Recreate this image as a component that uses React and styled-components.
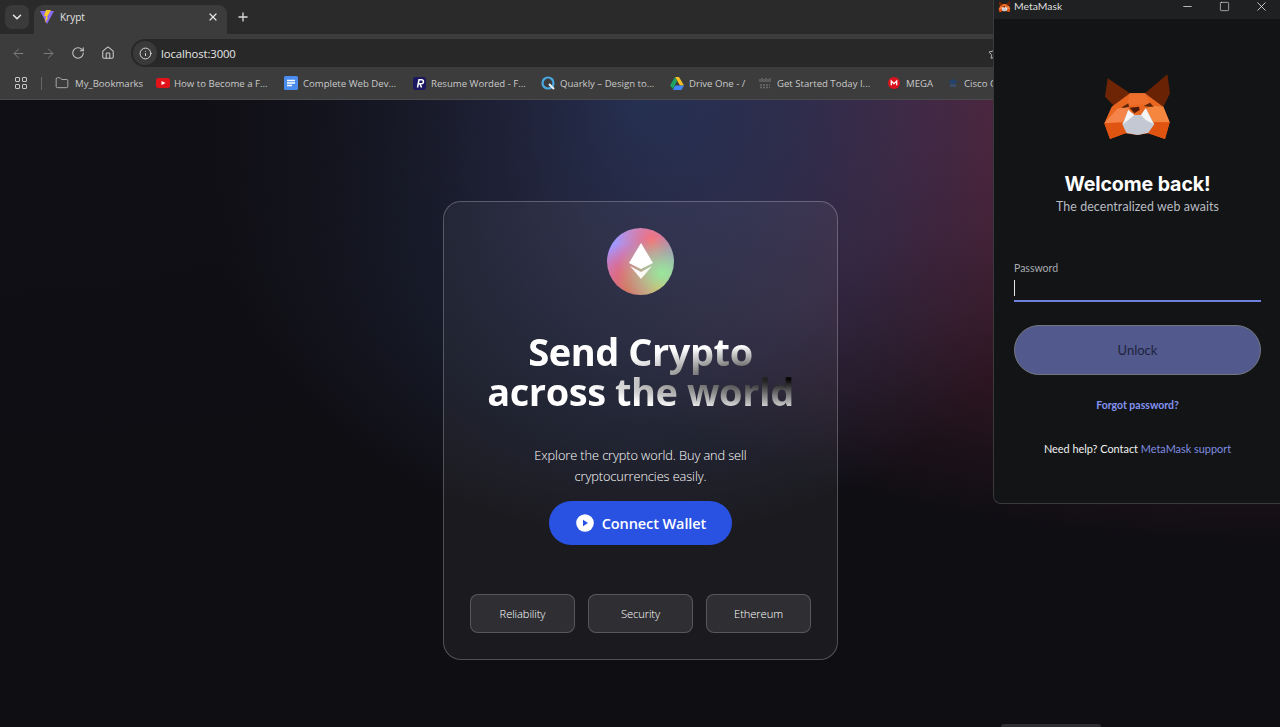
import React from "react";
import styled, { createGlobalStyle } from "styled-components";
import { ChevronDown, X, Plus, ArrowLeft, ArrowRight, RotateCw, House, Info, Folder, Star, Minus, Square } from "lucide-react";

const Global = createGlobalStyle`
  html, body { margin: 0; padding: 0; height: 100%; background: #0f0e13; }
  #root { height: 100%; }
  * { box-sizing: border-box; }
`;

const Screen = styled.div`
  position: relative; width: 1280px; height: 727px; overflow: hidden;
  display: flex; flex-direction: column; background: #0f0e13;
  font-family: "Open Sans", "Noto Sans", sans-serif;
`;

/* ---- browser chrome ---- */
const TabStrip = styled.div`
  height: 34px; background: #2a2a2a; display: flex; align-items: flex-end; padding-left: 5px; gap: 5px; flex: none;
`;
const TabMenu = styled.div`
  width: 24px; height: 24px; margin-bottom: 5px; border-radius: 7px; background: #3a3a3a; color: #e6e6e6;
  display: flex; align-items: center; justify-content: center;
`;
const Tab = styled.div`
  width: 193px; height: 29px; background: #3c3c3c; border-radius: 9px 9px 0 0; display: flex; align-items: center;
  padding: 0 8px 5px 6px; color: #e3e3e3; font-size: 10px; gap: 6px;
`;
const TabTitle = styled.span`flex: 1;`;
const NewTab = styled.div`
  color: #dcdcdc; height: 29px; padding: 0 0 5px 4px; display: flex; align-items: center;
`;
const Toolbar = styled.div`
  height: 33px; background: #3c3c3c; display: flex; align-items: center; padding: 5px 0 0 11px; flex: none;
`;
const NavButton = styled.div`
  width: 30px; display: flex; color: ${p => (p.$off ? "#7d7d7d" : "#c9c9c9")};
`;
const Omnibox = styled.div`
  flex: 1; height: 28px; background: #282828; border-radius: 14px 0 0 14px; display: flex; align-items: center;
  padding-left: 2px; gap: 4px; color: #e6e6e6; font-size: 11.3px; letter-spacing: -0.1px;
`;
const InfoChip = styled.div`
  width: 24px; height: 24px; border-radius: 50%; background: #3a3a3a; display: flex; align-items: center; justify-content: center; color: #dadada;
`;
const OmniStar = styled.div`
  margin-left: auto; margin-right: 279px; display: flex; color: #c9c9c9;
`;
const BookmarkBar = styled.div`
  height: 33px; background: #3c3c3c; border-bottom: 1px solid #4a4a50; display: flex; align-items: center; padding-left: 15px; flex: none; overflow: hidden;
  color: #c9c9c9; font-size: 9.6px; white-space: nowrap;
`;
const AppsGrid = styled.div`
  display: grid; grid-template-columns: 5px 5px; gap: 2px; width: 12px; flex: none;
`;
const AppCell = styled.i`display: block; width: 5px; height: 5px; border: 1.2px solid #c6c6c6; border-radius: 1px;`;
const Separator = styled.div`width: 1px; height: 13px; background: #666; margin: 0 13px 0 14px; flex: none;`;
const Bookmark = styled.div`
  width: ${p => p.$w}px; flex: none; display: flex; align-items: center; gap: ${p => p.$gap ?? 5}px;
`;
const BIcon = styled.svg`flex: none; display: block;`;

/* ---- dapp page ---- */
const Page = styled.main`
  flex: 1; display: flex; justify-content: center; align-items: flex-start; padding-top: 101px;
  background-color: #0f0e13;
  background-image:
    radial-gradient(at 0% 0%, hsla(253,16%,7%,1) 0, transparent 50%),
    radial-gradient(at 50% 0%, hsla(225,39%,30%,1) 0, transparent 50%),
    radial-gradient(at 100% 0%, hsla(339,49%,30%,1) 0, transparent 50%);
`;
const Card = styled.section`
  width: 395px; height: 459px; margin-left: 1px; border-radius: 18px; border: 1px solid rgba(255,255,255,0.24);
  background: rgba(255,255,255,0.05); display: flex; flex-direction: column; align-items: center; padding-top: 26px; color: #fff;
`;
const EthBadge = styled.div`
  width: 67px; height: 67px; border-radius: 50%; flex: none; display: flex; align-items: center; justify-content: center;
  background-color: #a099ff;
  background-image:
    radial-gradient(at 83% 67%, rgb(152,231,156) 0, transparent 58%),
    radial-gradient(at 67% 20%, hsla(357,94%,71%,1) 0, transparent 59%),
    radial-gradient(at 88% 35%, hsla(222,81%,65%,1) 0, transparent 50%),
    radial-gradient(at 31% 91%, hsla(9,61%,61%,1) 0, transparent 52%),
    radial-gradient(at 27% 71%, hsla(336,91%,65%,1) 0, transparent 49%),
    radial-gradient(at 74% 89%, hsla(30,98%,65%,1) 0, transparent 51%);
`;
const Title = styled.h1`
  margin: 36px 0 0; font-size: 38px; line-height: 40px; font-weight: 700; text-align: center; white-space: nowrap; letter-spacing: -0.45px;
  background-color: #fff;
  background-image:
    radial-gradient(at 4% 36%, hsla(0,0%,100%,1) 0, transparent 53%),
    radial-gradient(at 100% 60%, rgb(0,0,0) 0, transparent 50%);
  -webkit-background-clip: text; background-clip: text; color: transparent;
`;
const Lead = styled.p`
  margin: 34px 0 0; font-size: 12.8px; line-height: 21px; font-weight: 300; text-align: center; color: #fff; letter-spacing: -0.1px;
`;
const ConnectButton = styled.button`
  margin-top: 14px; width: 183px; height: 44px; border: 0; border-radius: 22px; background: #2952e3; color: #fff; font: inherit;
  font-size: 14.5px; font-weight: 600; display: flex; align-items: center; justify-content: center; gap: 8px; letter-spacing: -0.1px; padding: 0 0 0 1px;
`;
const FeatureRow = styled.div`
  margin-top: 49px; display: flex; gap: 13px;
`;
const Feature = styled.div`
  width: 105px; height: 39px; border-radius: 8px; background: #2f2f33; border: 1px solid rgba(255,255,255,0.2);
  display: flex; align-items: center; justify-content: center; font-size: 11.2px; font-weight: 300; color: #fff; letter-spacing: -0.1px;
`;

/* ---- metamask popup (a window on the desktop) ---- */
const Popup = styled.aside`
  position: absolute; left: 993px; top: 0; width: 287px; height: 504px; background: #131416; color: #fff;
  border-left: 1px solid #3a3a3d; border-bottom: 1px solid #3a3a3d; border-bottom-left-radius: 8px;
  display: flex; flex-direction: column; font-family: "Lato", "Inter", sans-serif;
`;
const TitleBar = styled.div`
  height: 19px; background: #1f2021; display: flex; align-items: center; padding: 0 0 7px 3px; gap: 2px; font-size: 10.4px; color: #dedede; flex: none;
`;
const WindowControls = styled.div`
  margin-left: auto; display: flex; align-items: center; color: #e8e8e8;
`;
const WinButton = styled.div`
  width: 37px; display: flex; justify-content: center;
`;
const PopupBody = styled.div`
  flex: 1; display: flex; flex-direction: column; align-items: center; padding: 46px 19px 0 20px;
`;
const Welcome = styled.h2`
  margin: 27px 0 0; font-family: "Inter", sans-serif; font-size: 19.6px; line-height: 24px; font-weight: 700; color: #fff; letter-spacing: -0.1px;
`;
const Tagline = styled.div`
  margin-top: 2px; font-size: 12.4px; line-height: 18px; color: #b9bcc2; letter-spacing: 0.1px;
`;
const Field = styled.div`
  width: 100%; margin-top: 45px;
`;
const FieldLabel = styled.div`
  font-size: 10.5px; line-height: 14px; color: #a8abb0;
`;
const FieldInput = styled.div`
  height: 26px; margin-top: 1px; border-bottom: 2px solid #6f81dc; display: flex; align-items: flex-start; padding-top: 4px;
`;
const Caret = styled.i`display: block; width: 1px; height: 16px; background: #e8e8e8;`;
const Unlock = styled.button`
  width: 100%; height: 50px; margin-top: 23px; border-radius: 25px; background: #52598c; border: 1px solid #74767e; font: inherit;
  font-family: "Lato", sans-serif; font-size: 13px; color: #20233c; padding: 0; flex: none;
`;
const Forgot = styled.a`
  margin-top: 23px; font-size: 10.5px; line-height: 14px; font-weight: 700; color: #8393f2;
`;
const Help = styled.div`
  margin-top: 29px; font-size: 10.9px; line-height: 16px; color: #f2f2f2;
`;
const HelpLink = styled.span`color: #7f8de0;`;
const TaskHint = styled.div`
  position: absolute; left: 1001px; bottom: 0; width: 100px; height: 3px; background: #2e2e32; border-radius: 4px 4px 0 0;
`;

function Fox({ size = 85 }) {
  return (
    <svg width={size} height={size * 80 / 85} viewBox="0 0 255 240">
      <polygon points="38,40 105,85 66,132 30,95" fill="#6e2505" />
      <polygon points="217,28 225,85 205,125 150,85" fill="#6a2204" />
      <polygon points="105,85 150,85 205,125 224,172 210,222 160,205 128,210 90,205 45,222 28,175 50,125" fill="#e8661f" />
      <polygon points="105,85 150,85 170,122 135,118 95,122" fill="#ee6f2c" />
      <polygon points="66,132 95,122 105,136 80,175 28,175" fill="#f5844a" />
      <polygon points="170,122 205,125 224,172 175,172 150,132" fill="#f58640" />
      <polygon points="28,175 80,172 92,205 45,222" fill="#df5410" />
      <polygon points="224,172 175,172 160,205 210,222" fill="#df5410" />
      <polygon points="100,135 118,150 138,150 152,130 178,178 160,203 128,210 95,204 82,178" fill="#c4c8d2" />
      <polygon points="100,135 118,150 100,165 84,178" fill="#f4f4f6" />
      <polygon points="152,130 138,150 152,165 176,177" fill="#f4f4f6" />
      <polygon points="78,128 100,115 102,125 90,128" fill="#5a2409" />
      <polygon points="146,123 165,113 176,125 160,125" fill="#5a2409" />
      <polygon points="104,128 132,125 134,135 118,145" fill="#4f1b08" />
    </svg>
  );
}

function EthMark() {
  return (
    <svg width="24" height="37" viewBox="0 0 24 37">
      <polygon points="12,0 24,20 12,26 0,20" fill="#fff" />
      <polygon points="12,36 1,23 12,29 23,23" fill="#fff" fillOpacity="0.92" />
    </svg>
  );
}

const VITE = (
  <BIcon width="14" height="14" viewBox="0 0 14 14">
    <polygon points="0,1 14,1 7,14" fill="#8b6cf0" />
    <polygon points="6,0 11,0 7,7 8,8 5,13 6,6 4,6" fill="#f7c52c" />
  </BIcon>
);
const YT = (
  <BIcon width="14" height="10" viewBox="0 0 14 10">
    <rect width="14" height="10" rx="2.5" fill="#e3131a" />
    <polygon points="5.5,3 9.5,5 5.5,7" fill="#fff" />
  </BIcon>
);
const DOC = (
  <BIcon width="14" height="14" viewBox="0 0 14 14">
    <rect width="14" height="14" rx="1.5" fill="#4a8cf0" />
    <path d="M3 4.5h8M3 7h8M3 9.5h5" stroke="#fff" strokeWidth="1.3" />
  </BIcon>
);
const RES = (
  <BIcon width="13" height="13" viewBox="0 0 13 13">
    <rect width="13" height="13" rx="3" fill="#1b1760" />
    <path d="M4.5 10.5 6 2.8h2.5a1.9 1.9 0 0 1 0 3.9H5.4M7 6.7l1.5 3.8" stroke="#fff" strokeWidth="1.5" fill="none" />
  </BIcon>
);
const QUARK = (
  <BIcon width="14" height="14" viewBox="0 0 14 14">
    <circle cx="7" cy="7" r="5.5" fill="none" stroke="#4aa8e0" strokeWidth="2.2" />
    <path d="M8 8l5 5" stroke="#e8f4fa" strokeWidth="2" />
  </BIcon>
);
const DRIVE = (
  <BIcon width="14" height="13" viewBox="0 0 14 13">
    <polygon points="5,0 9,0 14,8.5 10,8.5" fill="#f6c026" />
    <polygon points="5,0 7,4 3,12 0,8.5" fill="#1ea362" />
    <polygon points="3,13 5,8.5 14,8.5 11.5,13" fill="#4285f4" />
  </BIcon>
);
const CISCO = (
  <BIcon width="12" height="12" viewBox="0 0 12 12">
    <path d="M1 2v3M3 1v4M5 2v3M7 1v4M9 2v3M11 1v4" stroke="#7a7a7a" strokeWidth="1" />
    <path d="M1 8h10M1 10.5h10" stroke="#6c6c6c" strokeWidth="1.5" strokeDasharray="2 1" />
  </BIcon>
);
const MEGA = (
  <BIcon width="12" height="12" viewBox="0 0 12 12">
    <circle cx="6" cy="6" r="6" fill="#d9141e" />
    <path d="M3.3 8.3V4l2.7 2.6L8.7 4v4.3" stroke="#fff" strokeWidth="1.3" fill="none" />
  </BIcon>
);
const CAP = (
  <BIcon width="12" height="12" viewBox="0 0 12 12">
    <polygon points="6,2 11,5 6,7 1,5" fill="#24426e" />
    <rect x="3" y="7" width="6" height="3" fill="#3a4d68" />
  </BIcon>
);

const bookmarks = [
  { icon: <Folder size={14} strokeWidth={1.3} />, label: "My_Bookmarks", w: 101, gap: 6 },
  { icon: YT, label: "How to Become a F...", w: 128, gap: 4 },
  { icon: DOC, label: "Complete Web Dev...", w: 129 },
  { icon: RES, label: "Resume Worded - F...", w: 128 },
  { icon: QUARK, label: "Quarkly – Design to...", w: 129 },
  { icon: DRIVE, label: "Drive One - /", w: 89 },
  { icon: CISCO, label: "Get Started Today I...", w: 129, gap: 6 },
  { icon: MEGA, label: "MEGA", w: 59, gap: 6 },
  { icon: CAP, label: "Cisco C", w: 70 },
];

const features = ["Reliability", "Security", "Ethereum"];

export default function App() {
  return (
    <Screen>
      <Global />
      <TabStrip>
        <TabMenu><ChevronDown size={14} strokeWidth={2.6} /></TabMenu>
        <Tab>
          {VITE}
          <TabTitle>Krypt</TabTitle>
          <X size={12} strokeWidth={2.4} />
        </Tab>
        <NewTab><Plus size={14} strokeWidth={2.2} /></NewTab>
      </TabStrip>
      <Toolbar>
        <NavButton $off><ArrowLeft size={15} strokeWidth={1.6} /></NavButton>
        <NavButton $off><ArrowRight size={15} strokeWidth={1.6} /></NavButton>
        <NavButton><RotateCw size={14} strokeWidth={1.8} /></NavButton>
        <NavButton><House size={14} strokeWidth={1.8} /></NavButton>
        <Omnibox>
          <InfoChip><Info size={13} strokeWidth={1.8} /></InfoChip>
          localhost:3000
          <OmniStar><Star size={13} strokeWidth={1.6} /></OmniStar>
        </Omnibox>
      </Toolbar>
      <BookmarkBar>
        <AppsGrid><AppCell /><AppCell /><AppCell /><AppCell /></AppsGrid>
        <Separator />
        {bookmarks.map(b => (
          <Bookmark key={b.label} $w={b.w} $gap={b.gap}>{b.icon}{b.label}</Bookmark>
        ))}
      </BookmarkBar>

      <Page>
        <Card>
          <EthBadge><EthMark /></EthBadge>
          <Title>Send Crypto<br />across the world</Title>
          <Lead>Explore the crypto world. Buy and sell<br />cryptocurrencies easily.</Lead>
          <ConnectButton>
            <svg width="18" height="18" viewBox="0 0 18 18">
              <circle cx="9" cy="9" r="8.8" fill="#fff" />
              <polygon points="7,5.8 12,9 7,12.2" fill="#2952e3" />
            </svg>
            Connect Wallet
          </ConnectButton>
          <FeatureRow>
            {features.map(f => <Feature key={f}>{f}</Feature>)}
          </FeatureRow>
        </Card>
      </Page>

      <Popup>
        <TitleBar>
          <Fox size={15} />
          MetaMask
          <WindowControls>
            <WinButton><Minus size={13} strokeWidth={1.4} /></WinButton>
            <WinButton><Square size={11} strokeWidth={1.4} /></WinButton>
            <WinButton><X size={15} strokeWidth={1.3} /></WinButton>
          </WindowControls>
        </TitleBar>
        <PopupBody>
          <Fox />
          <Welcome>Welcome back!</Welcome>
          <Tagline>The decentralized web awaits</Tagline>
          <Field>
            <FieldLabel>Password</FieldLabel>
            <FieldInput><Caret /></FieldInput>
          </Field>
          <Unlock>Unlock</Unlock>
          <Forgot>Forgot password?</Forgot>
          <Help>Need help? Contact <HelpLink>MetaMask support</HelpLink></Help>
        </PopupBody>
      </Popup>
      <TaskHint />
    </Screen>
  );
}
